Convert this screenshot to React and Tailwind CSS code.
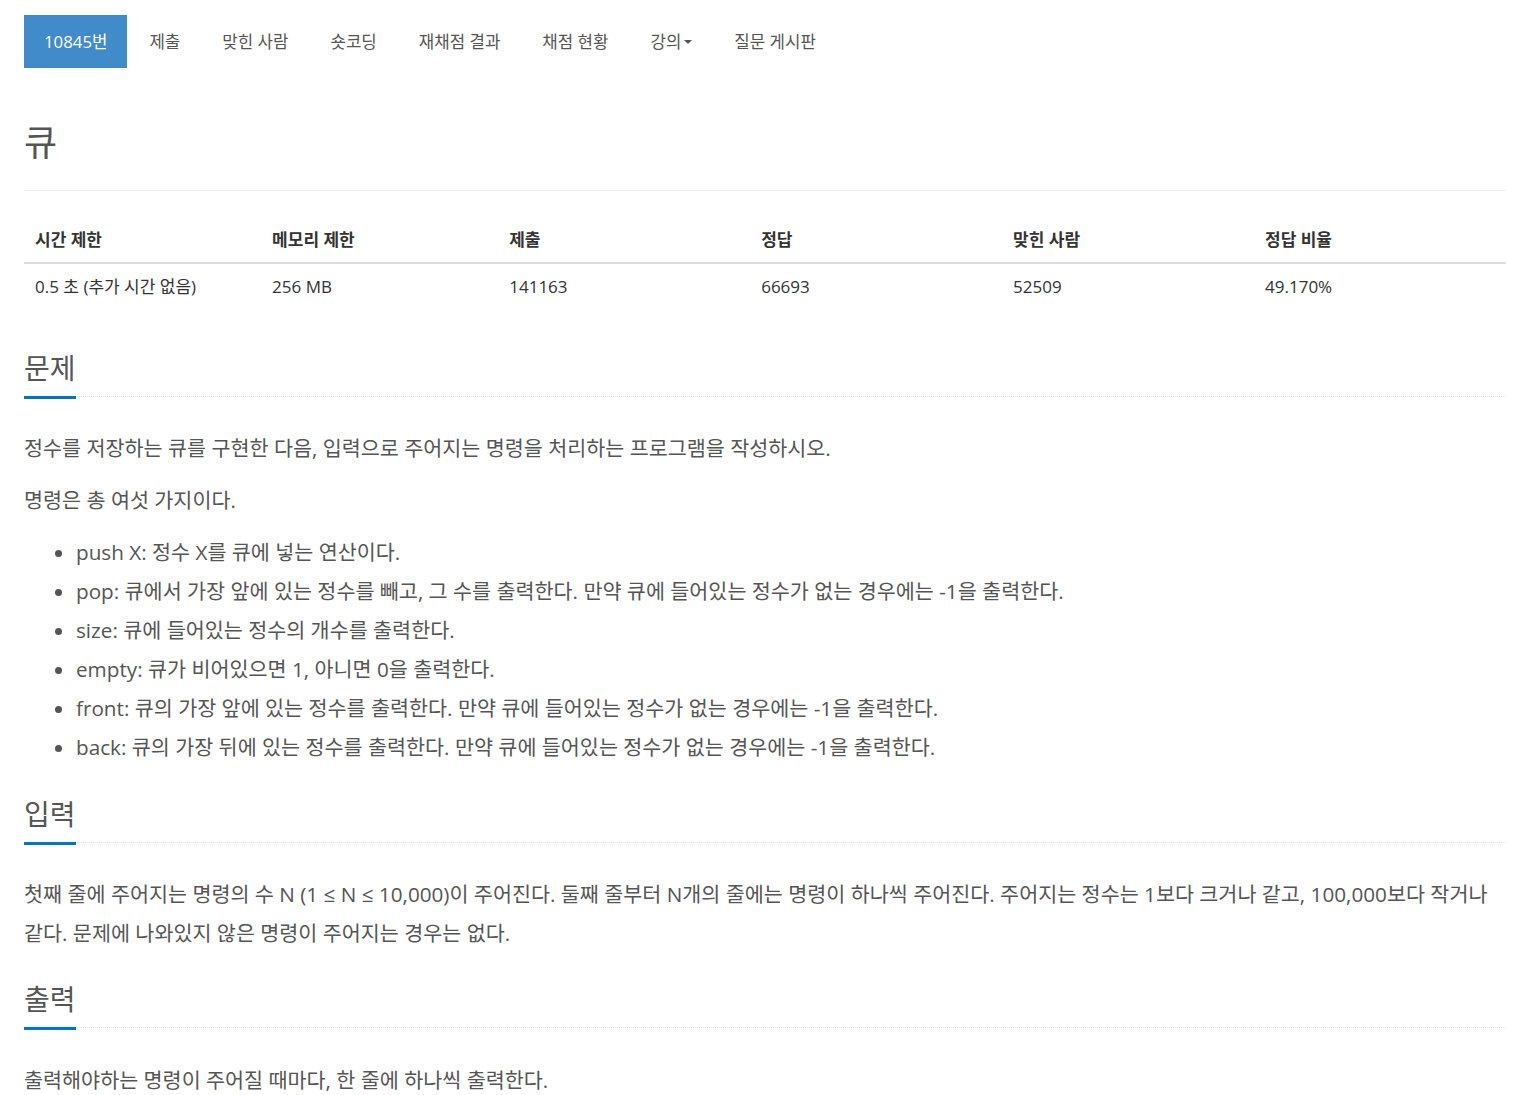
import React from 'react';

const font = { fontFamily: '"Open Sans", "Noto Sans CJK KR", sans-serif' };

const navItems = ['제출', '맞힌 사람', '숏코딩', '재채점 결과', '채점 현황', '강의', '질문 게시판'];

const stats = [
  { label: '시간 제한', value: '0.5 초 (추가 시간 없음)', w: 'w-[16%]' },
  { label: '메모리 제한', value: '256 MB', w: 'w-[16%]' },
  { label: '제출', value: '141163', w: 'w-[17%]' },
  { label: '정답', value: '66693', w: 'w-[17%]' },
  { label: '맞힌 사람', value: '52509', w: 'w-[17%]' },
  { label: '정답 비율', value: '49.170%', w: 'w-[17%]' },
];

const commands = [
  'push X: 정수 X를 큐에 넣는 연산이다.',
  'pop: 큐에서 가장 앞에 있는 정수를 빼고, 그 수를 출력한다. 만약 큐에 들어있는 정수가 없는 경우에는 -1을 출력한다.',
  'size: 큐에 들어있는 정수의 개수를 출력한다.',
  'empty: 큐가 비어있으면 1, 아니면 0을 출력한다.',
  'front: 큐의 가장 앞에 있는 정수를 출력한다. 만약 큐에 들어있는 정수가 없는 경우에는 -1을 출력한다.',
  'back: 큐의 가장 뒤에 있는 정수를 출력한다. 만약 큐에 들어있는 정수가 없는 경우에는 -1을 출력한다.',
];

const Headline = ({ children, className = '' }) => (
  <div className={`flex border-b border-dotted border-[#e4e4e4] ${className}`}>
    <h2 className="text-[28px] leading-[34px] text-[#555] pb-[11px] border-b-[3px] border-[#0076c0] -mb-[3px]">
      {children}
    </h2>
  </div>
);

const App = () => {
  return (
    <div className="min-h-screen bg-white pl-6 pr-[30px]" style={font}>
      {/* Problem menu */}
      <ul className="flex pt-[15px] text-[16.8px] leading-[23px]">
        <li className="bg-[#428bca] text-white px-5 py-[15px]">10845번</li>
        {navItems.map((item) => (
          <li key={item} className="ml-[2px] px-5 py-[15px] text-[#555] flex items-center">
            {item}
            {item === '강의' && (
              <span className="ml-[3px] inline-block w-0 h-0 border-x-[4.5px] border-x-transparent border-t-[4.5px] border-t-[#555]" />
            )}
          </li>
        ))}
      </ul>

      {/* Title */}
      <div className="mt-[55px] pb-[27px] border-b border-[#eee]">
        <h1 className="text-[36px] leading-[40px] text-[#555]">큐</h1>
      </div>

      {/* Stats table */}
      <table className="w-full mt-[26px] text-[17px] text-[#333]">
        <thead>
          <tr className="border-b-2 border-[#ddd]">
            {stats.map((s) => (
              <th key={s.label} className={`${s.w} text-left font-bold px-[11px] py-[11px] leading-[23px]`}>
                {s.label}
              </th>
            ))}
          </tr>
        </thead>
        <tbody>
          <tr>
            {stats.map((s) => (
              <td key={s.label} className="px-[11px] py-[11px] leading-[23px]">
                {s.value}
              </td>
            ))}
          </tr>
        </tbody>
      </table>

      {/* 문제 */}
      <Headline className="mt-[42px]">문제</Headline>
      <div className="mt-[32px] text-[20.7px] leading-[39px] text-[#555]">
        <p className="mb-[13px]">정수를 저장하는 큐를 구현한 다음, 입력으로 주어지는 명령을 처리하는 프로그램을 작성하시오.</p>
        <p className="mb-[13px]">명령은 총 여섯 가지이다.</p>
        <ul className="list-disc pl-[52px]">
          {commands.map((c) => (
            <li key={c}>{c}</li>
          ))}
        </ul>
      </div>

      {/* 입력 */}
      <Headline className="mt-[30px]">입력</Headline>
      <p className="mt-[32px] text-[20.7px] leading-[39px] text-[#555]">
        첫째 줄에 주어지는 명령의 수 N (1 ≤ N ≤ 10,000)이 주어진다. 둘째 줄부터 N개의 줄에는 명령이 하나씩 주어진다. 주어지는 정수는 1보다 크거나 같고, 100,000보다 작거나 같다. 문제에 나와있지 않은 명령이 주어지는 경우는 없다.
      </p>

      {/* 출력 */}
      <Headline className="mt-[29px]">출력</Headline>
      <p className="mt-[33px] text-[20.7px] leading-[39px] text-[#555]">
        출력해야하는 명령이 주어질 때마다, 한 줄에 하나씩 출력한다.
      </p>
    </div>
  );
};

export default App;
